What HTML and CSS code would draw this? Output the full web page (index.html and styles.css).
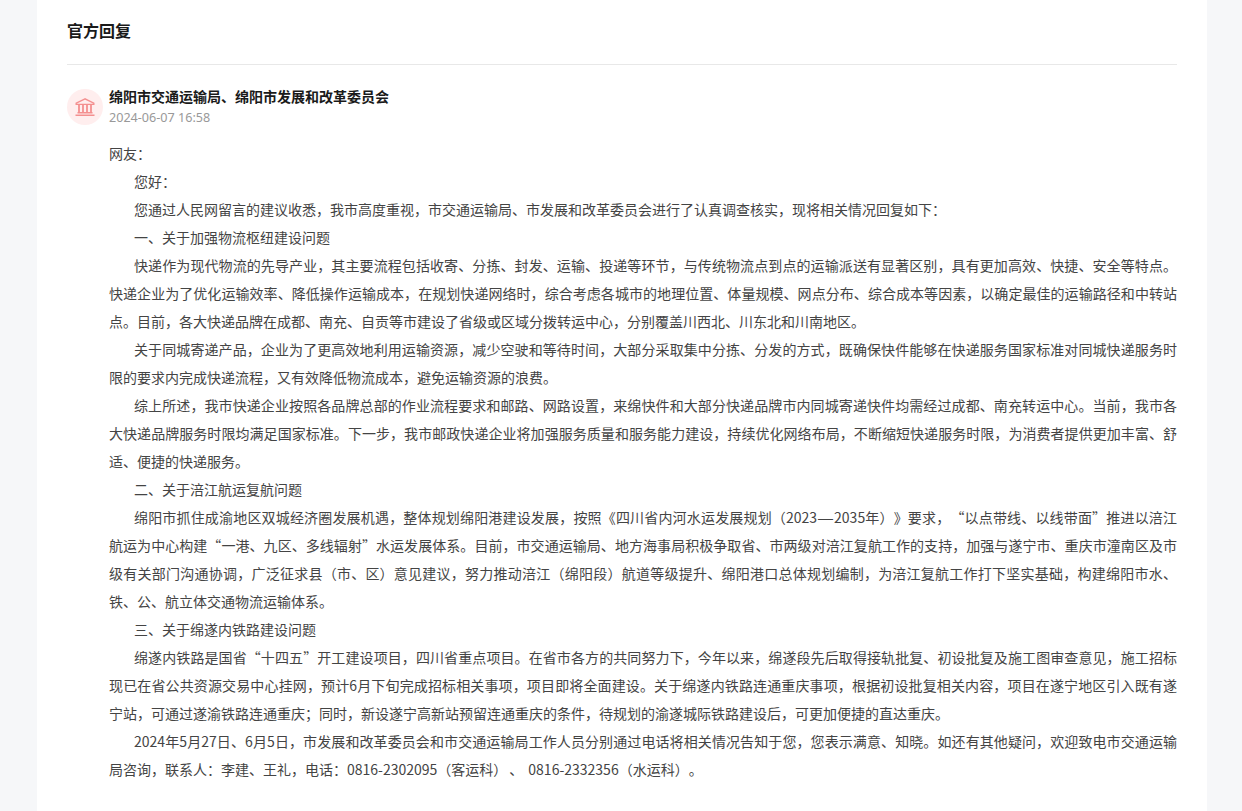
FILE: index.html
```html
<!DOCTYPE html>
<html lang="zh">
<head>
<meta charset="utf-8">
<title>官方回复</title>
<link rel="stylesheet" href="styles.css">
</head>
<body>
<main class="card">
  <h2 class="title">官方回复</h2>
  <section class="reply">
    <header class="head">
      <span class="avatar">
        <svg width="20" height="18" viewBox="0 0 20 18" fill="none" stroke="#f48f8f" stroke-width="1.400">
          <path d="M10 .9 1.200 5.200v1.200h17.600V5.200z"/>
          <path d="M4 7v7.500M8 7v7.500M12 7v7.500M16 7v7.500" stroke-width="1.800"/>
          <path d="M2.500 14.700h15M.5 17.200h19" stroke-width="1.400"/>
        </svg>
      </span>
      <div class="meta">
        <div class="org">绵阳市交通运输局、绵阳市发展和改革委员会</div>
        <div class="date">2024-06-07 16:58</div>
      </div>
    </header>
    <div class="body">
      <p>网友：</p>
      <p class="ind">您好：</p>
      <p class="ind">您通过人民网留言的建议收悉，我市高度重视，市交通运输局、市发展和改革委员会进行了认真调查核实，现将相关情况回复如下：</p>
      <p class="ind">一、关于加强物流枢纽建设问题</p>
      <p class="ind">快递作为现代物流的先导产业，其主要流程包括收寄、分拣、封发、运输、投递等环节，与传统物流点到点的运输派送有显著区别，具有更加高效、快捷、安全等特点。快递企业为了优化运输效率、降低操作运输成本，在规划快递网络时，综合考虑各城市的地理位置、体量规模、网点分布、综合成本等因素，以确定最佳的运输路径和中转站点。目前，各大快递品牌在成都、南充、自贡等市建设了省级或区域分拨转运中心，分别覆盖川西北、川东北和川南地区。</p>
      <p class="ind">关于同城寄递产品，企业为了更高效地利用运输资源，减少空驶和等待时间，大部分采取集中分拣、分发的方式，既确保快件能够在快递服务国家标准对同城快递服务时限的要求内完成快递流程，又有效降低物流成本，避免运输资源的浪费。</p>
      <p class="ind">综上所述，我市快递企业按照各品牌总部的作业流程要求和邮路、网路设置，来绵快件和大部分快递品牌市内同城寄递快件均需经过成都、南充转运中心。当前，我市各大快递品牌服务时限均满足国家标准。下一步，我市邮政快递企业将加强服务质量和服务能力建设，持续优化网络布局，不断缩短快递服务时限，为消费者提供更加丰富、舒适、便捷的快递服务。</p>
      <p class="ind">二、关于涪江航运复航问题</p>
      <p class="ind">绵阳市抓住成渝地区双城经济圈发展机遇，整体规划绵阳港建设发展，按照《四川省内河水运发展规划（2023<span class="dash">—</span>2035年）》要求，“以点带线、以线带面”推进以涪江航运为中心构建“一港、九区、多线辐射”水运发展体系。目前，市交通运输局、地方海事局积极争取省、市两级对涪江复航工作的支持，加强与遂宁市、重庆市潼南区及市级有关部门沟通协调，广泛征求县（市、区）意见建议，努力推动涪江（绵阳段）航道等级提升、绵阳港口总体规划编制，为涪江复航工作打下坚实基础，构建绵阳市水、铁、公、航立体交通物流运输体系。</p>
      <p class="ind">三、关于绵遂内铁路建设问题</p>
      <p class="ind">绵遂内铁路是国省“十四五”开工建设项目，四川省重点项目。在省市各方的共同努力下，今年以来，绵遂段先后取得接轨批复、初设批复及施工图审查意见，施工招标现已在省公共资源交易中心挂网，预计6月下旬完成招标相关事项，项目即将全面建设。关于绵遂内铁路连通重庆事项，根据初设批复相关内容，项目在遂宁地区引入既有遂宁站，可通过遂渝铁路连通重庆；同时，新设遂宁高新站预留连通重庆的条件，待规划的渝遂城际铁路建设后，可更加便捷的直达重庆。</p>
      <p class="ind">2024年5月27日、6月5日，市发展和改革委员会和市交通运输局工作人员分别通过电话将相关情况告知于您，您表示满意、知晓。如还有其他疑问，欢迎致电市交通运输局咨询，联系人：李建、王礼，电话：0816-2302095（客运科）<span class="comma">、</span>0816-2332356（水运科）。</p>
    </div>
  </section>
</main>
</body>
</html>
```

FILE: styles.css
```css
* { box-sizing: border-box; }
html, body { margin: 0; padding: 0; height: 100%; overflow: hidden; }
body {
  background: #f6f7f9;
  font-family: "Noto Sans CJK SC", "Noto Sans", sans-serif;
  color: #444;
  text-spacing-trim: space-all;
  font-kerning: none;
  font-feature-settings: "chws" 0, "kern" 0, "palt" 0;
}
.card {
  width: 1170px;
  height: 811px;
  margin-left: 37px;
  padding: 0 30px;
  background: #fff;
}
.title {
  margin: 0;
  height: 65px;
  padding-top: 18px;
  font-size: 16px;
  line-height: 25px;
  font-weight: 700;
  color: #1a1a1a;
  border-bottom: 1px solid #e8e8e8;
}
.reply { padding-top: 21px; }
.head { display: flex; align-items: flex-start; gap: 6px; }
.avatar {
  width: 36px;
  height: 36px;
  margin-top: 3px;
  border-radius: 50%;
  background: #ffeeee;
  display: flex;
  align-items: center;
  justify-content: center;
  flex: none;
}
.meta { display: flex; flex-direction: column; gap: 2px; }
.org { font-size: 14px; line-height: 20px; font-weight: 700; color: #1a1a1a; }
.date { font-size: 12.600px; line-height: 20px; color: #999; font-family: "Noto Sans", sans-serif; }
.body { margin: 11px 0 0 42px; font-size: 14px; line-height: 28px; }
.body p { margin: 0; text-align: justify; }
.body .ind { text-indent: 25px; }
.dash { font-family: "Liberation Sans", sans-serif; font-size: 15px; line-height: 1; margin: 0 1px; }
.comma { margin-left: 2px; margin-right: 5px; }
```
